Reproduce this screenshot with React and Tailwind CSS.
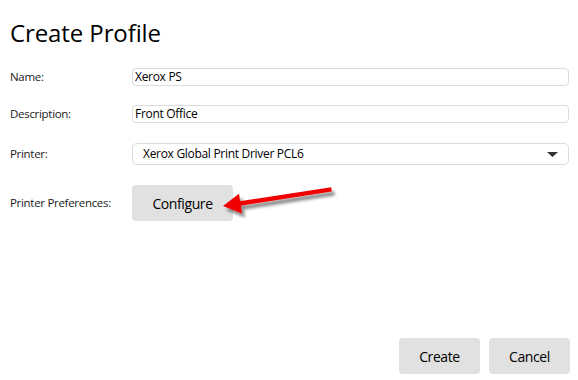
import React from "react";

const font = { fontFamily: '"Open Sans", "Noto Sans", sans-serif' };

function Arrow() {
  return (
    <svg
      className="absolute left-[210px] top-[178px] pointer-events-none"
      width="140"
      height="50"
      viewBox="0 0 140 50"
    >
      <defs>
        <filter id="sh" x="-20%" y="-50%" width="140%" height="200%">
          <feDropShadow dx="3" dy="4" stdDeviation="1.6" floodColor="#000" floodOpacity="0.45" />
        </filter>
      </defs>
      <g filter="url(#sh)">
        <line x1="30" y1="25.5" x2="121.5" y2="11.3" stroke="#f00000" strokeWidth="4.4" strokeLinecap="butt" />
        <polygon points="13,28 29,15.8 32,35.6" fill="#f00000" />
      </g>
    </svg>
  );
}

export default function App() {
  return (
    <div className="relative w-[578px] h-[380px] bg-white text-[#1a1a1a] flex flex-col pl-[10px] pr-[8px] pb-[6px]" style={font}>
      <h1 className="mt-[17px] h-[32px] leading-[32px] text-[24px] font-normal tracking-[-0.1px] text-black">Create Profile</h1>

      <div className="mt-[19px] flex items-center">
        <div className="w-[122px] text-[11.5px] tracking-[-0.3px]">Name:</div>
        <div className="flex-1 mr-[1px] h-[18px] border border-[#dcdcdc] rounded-[4px] pl-[2px] text-[12px] leading-[16px] tracking-[-0.3px] text-black">Xerox PS</div>
      </div>

      <div className="mt-[19px] flex items-center">
        <div className="w-[122px] text-[11.5px] tracking-[-0.3px]">Description:</div>
        <div className="flex-1 mr-[1px] h-[18px] border border-[#dcdcdc] rounded-[4px] pl-[2px] text-[12px] leading-[16px] tracking-[-0.3px] text-black">Front Office</div>
      </div>

      <div className="mt-[20px] flex items-center">
        <div className="w-[122px] text-[11.5px] tracking-[-0.3px]">Printer:</div>
        <div className="flex-1 mr-[1px] h-[22px] border border-[#dcdcdc] rounded-[5px] pl-[10px] pr-[10px] flex items-center justify-between text-[12px] tracking-[-0.3px] text-black">
          <span>Xerox Global Print Driver PCL6</span>
          <svg width="11" height="5" viewBox="0 0 11 5">
            <polygon points="0,0 11,0 5.5,5" fill="#333" />
          </svg>
        </div>
      </div>

      <div className="mt-[20px] flex items-center">
        <div className="w-[122px] text-[11.5px] tracking-[-0.3px]">Printer Preferences:</div>
        <button className="w-[101px] h-[36px] bg-[#e1e1e1] rounded-[4px] text-[14px] tracking-[-0.4px] text-black">Configure</button>
      </div>

      <div className="mt-auto flex justify-end gap-[9px]">
        <button className="w-[81px] h-[36px] bg-[#e1e1e1] rounded-[4px] text-[14px] tracking-[-0.4px] text-black">Create</button>
        <button className="w-[81px] h-[36px] bg-[#e1e1e1] rounded-[4px] text-[14px] tracking-[-0.4px] text-black">Cancel</button>
      </div>

      <Arrow />
    </div>
  );
}
